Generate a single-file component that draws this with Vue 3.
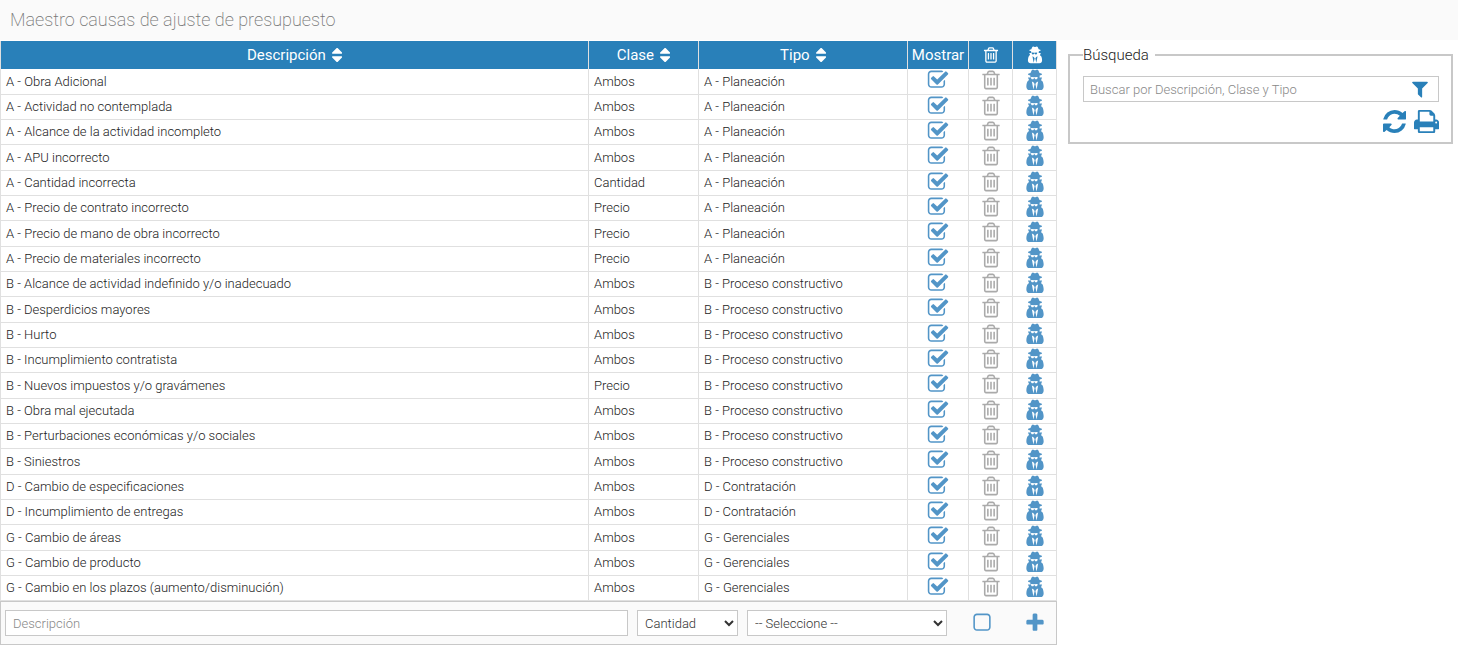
<script setup>
import { ref, computed } from 'vue'

const icons = {
  sort: 'M1408 1088q0 26-19 45l-448 448q-19 19-45 19t-45-19l-448-448q-19-19-19-45t19-45 45-19h896q26 0 45 19t19 45zm0-384q0 26-19 45t-45 19h-896q-26 0-45-19t-19-45 19-45l448-448q19-19 45-19t45 19l448 448q19 19 19 45z',
  checked: 'M1472 930v318q0 119-84.5 203.5t-203.5 84.5h-832q-119 0-203.5-84.5t-84.5-203.5v-832q0-119 84.5-203.5t203.5-84.5h832q63 0 117 25 15 7 18 23 3 17-9 29l-49 49q-10 10-23 10-3 0-9-2-23-6-45-6h-832q-66 0-113 47t-47 113v832q0 66 47 113t113 47h832q66 0 113-47t47-113v-254q0-13 9-22l64-64q10-10 23-10 6 0 12 3 20 8 20 29zm231-489l-814 814q-24 24-57 24t-57-24l-430-430q-24-24-24-57t24-57l110-110q24-24 57-24t57 24l263 263 647-647q24-24 57-24t57 24l110 110q24 24 24 57t-24 57z',
  unchecked: 'M1312 256h-832q-66 0-113 47t-47 113v832q0 66 47 113t113 47h832q66 0 113-47t47-113v-832q0-66-47-113t-113-47zm288 160v832q0 119-84.5 203.5t-203.5 84.5h-832q-119 0-203.5-84.5t-84.5-203.5v-832q0-119 84.5-203.5t203.5-84.5h832q119 0 203.5 84.5t84.5 203.5z',
  trash: 'M704 736v576q0 14-9 23t-23 9h-64q-14 0-23-9t-9-23v-576q0-14 9-23t23-9h64q14 0 23 9t9 23zm256 0v576q0 14-9 23t-23 9h-64q-14 0-23-9t-9-23v-576q0-14 9-23t23-9h64q14 0 23 9t9 23zm256 0v576q0 14-9 23t-23 9h-64q-14 0-23-9t-9-23v-576q0-14 9-23t23-9h64q14 0 23 9t9 23zm128 724v-948h-896v948q0 22 7 40.5t14.5 27 10.5 8.5h832q3 0 10.5-8.5t14.5-27 7-40.5zm-672-1076h448l-48-117q-7-9-17-11h-317q-10 2-17 11zm928 32v64q0 14-9 23t-23 9h-96v948q0 83-47 143.5t-113 60.5h-832q-66 0-113-58.5t-47-141.5v-952h-96q-14 0-23-9t-9-23v-64q0-14 9-23t23-9h309l70-167q15-37 54-63t79-26h320q40 0 79 26t54 63l70 167h309q14 0 23 9t9 23z',
  spy: 'M768 1664l96-448-96-128-128-64zm256 0l128-640-128 64-96 128zm100-992q-2-4-4-6-10-8-96-8-70 0-167 19-7 2-21 2t-21-2q-97-19-167-19-86 0-96 8-2 2-4 6 2 18 4 27 2 3 7.5 6.5t7.5 10.5q2 4 7.5 20.5t7 20.5 7.5 17 8.5 17 9 14 12 13.5 14 9.5 17.5 8 20.5 4 24.5 2q36 0 59-12.5t32.5-30 14.5-34.5 11.5-29.5 17.5-12.5h12q11 0 17.5 12.5t11.5 29.5 14.5 34.5 32.5 30 59 12.5q13 0 24.5-2t20.5-4 17.5-8 14-9.5 12-13.5 9-14 8.5-17 7.5-17 7-20.5 7.5-20.5q2-7 7.5-10.5t7.5-6.5q2-9 4-27zm476 779q0 121-73 190t-194 69h-874q-121 0-194-69t-73-190q0-61 4.5-118t19-125.5 37.5-123.5 63.5-103.5 93.5-74.5l-90-220h214q-22-64-22-128 0-12 2-32-194-40-194-96 0-57 210-99 17-62 51.5-134t70.5-114q32-37 76-37 30 0 84 31t84 31 84-31 84-31q44 0 76 37 36 42 70.5 114t51.5 134q210 42 210 99 0 56-194 96 7 81-20 160h214l-82 225q63 33 107.5 96.5t65.5 143.5 29 151.5 8 148.5z',
  filter: 'M1595 295q17 41-14 70l-493 493v742q0 42-39 59-13 5-25 5-27 0-45-19l-256-256q-19-19-19-45v-486l-493-493q-31-29-14-70 17-39 59-39h1280q42 0 59 39z',
  refresh: 'M1639 1056q0 5-1 7-64 268-268 434.5t-478 166.5q-146 0-282.5-55t-243.5-157l-129 129q-19 19-45 19t-45-19-19-45v-448q0-26 19-45t45-19h448q26 0 45 19t19 45-19 45l-137 137q71 66 161 102t187 36q134 0 250-65t186-179q11-17 53-117 8-23 30-23h192q13 0 22.5 9.5t9.5 22.5zm25-800v448q0 26-19 45t-45 19h-448q-26 0-45-19t-19-45 19-45l138-138q-148-137-349-137-134 0-250 65t-186 179q-11 17-53 117-8 23-30 23h-199q-13 0-22.5-9.5t-9.5-22.5v-7q65-268 270-434.5t480-166.5q146 0 284 55.5t245 156.5l130-129q19-19 45-19t45 19 19 45z',
  print: 'M448 1536h896v-256h-896v256zm0-640h896v-384h-160q-40 0-68-28t-28-68v-160h-640v640zm1152 64q0-26-19-45t-45-19-45 19-19 45 19 45 45 19 45-19 19-45zm128 0v416q0 13-9.5 22.5t-22.5 9.5h-224v160q0 40-28 68t-68 28h-960q-40 0-68-28t-28-68v-160h-224q-13 0-22.5-9.5t-9.5-22.5v-416q0-79 56.5-135.5t135.5-56.5h64v-544q0-40 28-68t68-28h672q40 0 88 20t76 48l152 152q28 28 48 76t20 88v256h64q79 0 135.5 56.5t56.5 135.5z',
  plus: 'M1600 736v192q0 40-28 68t-68 28h-416v416q0 40-28 68t-68 28h-192q-40 0-68-28t-28-68v-416h-416q-40 0-68-28t-28-68v-192q0-40 28-68t68-28h416v-416q0-40 28-68t68-28h192q40 0 68 28t28 68v416h416q40 0 68 28t28 68z',
}

const tipos = {
  A: 'A - Planeación',
  B: 'B - Proceso constructivo',
  D: 'D - Contratación',
  G: 'G - Gerenciales',
}

const rows = ref([
  ['A - Obra Adicional', 'Ambos'],
  ['A - Actividad no contemplada', 'Ambos'],
  ['A - Alcance de la actividad incompleto', 'Ambos'],
  ['A - APU incorrecto', 'Ambos'],
  ['A - Cantidad incorrecta', 'Cantidad'],
  ['A - Precio de contrato incorrecto', 'Precio'],
  ['A - Precio de mano de obra incorrecto', 'Precio'],
  ['A - Precio de materiales incorrecto', 'Precio'],
  ['B - Alcance de actividad indefinido y/o inadecuado', 'Ambos'],
  ['B - Desperdicios mayores', 'Ambos'],
  ['B - Hurto', 'Ambos'],
  ['B - Incumplimiento contratista', 'Ambos'],
  ['B - Nuevos impuestos y/o gravámenes', 'Precio'],
  ['B - Obra mal ejecutada', 'Ambos'],
  ['B - Perturbaciones económicas y/o sociales', 'Ambos'],
  ['B - Siniestros', 'Ambos'],
  ['D - Cambio de especificaciones', 'Ambos'],
  ['D - Incumplimiento de entregas', 'Ambos'],
  ['G - Cambio de áreas', 'Ambos'],
  ['G - Cambio de producto', 'Ambos'],
  ['G - Cambio en los plazos (aumento/disminución)', 'Ambos'],
].map(([descripcion, clase]) => ({ descripcion, clase, tipo: tipos[descripcion[0]], mostrar: true })))

const search = ref('')
const sortKey = ref('')
const draft = ref({ descripcion: '', clase: 'Cantidad', tipo: '', mostrar: false })

const visibleRows = computed(() => {
  const term = search.value.toLowerCase()
  const found = rows.value.filter((r) => `${r.descripcion} ${r.clase} ${r.tipo}`.toLowerCase().includes(term))
  return sortKey.value ? found.sort((a, b) => a[sortKey.value].localeCompare(b[sortKey.value])) : found
})

function removeRow(row) {
  rows.value = rows.value.filter((r) => r !== row)
}

function addRow() {
  if (!draft.value.descripcion || !draft.value.tipo) return
  rows.value.push({ ...draft.value })
  draft.value.descripcion = ''
}

function reset() {
  search.value = ''
  sortKey.value = ''
}

function printPage() {
  window.print()
}
</script>

<template>
  <div class="page">
    <header class="title-bar">
      <h1>Maestro causas de ajuste de presupuesto</h1>
    </header>
    <div class="content">
      <main>
        <table>
          <colgroup>
            <col />
            <col class="col-clase" />
            <col class="col-tipo" />
            <col class="col-mostrar" />
            <col class="col-action" />
            <col class="col-action" />
          </colgroup>
          <thead>
            <tr>
              <th v-for="[key, name] in [['descripcion', 'Descripción'], ['clase', 'Clase'], ['tipo', 'Tipo']]" :key="key" scope="col">
                <button type="button" class="sort" @click="sortKey = key">
                  {{ name }}
                  <svg class="icon-s" viewBox="384 0 1024 1792" aria-hidden="true"><path :d="icons.sort" /></svg>
                </button>
              </th>
              <th scope="col">Mostrar</th>
              <th scope="col" aria-label="Eliminar">
                <svg class="icon-s" viewBox="0 0 1792 1792" aria-hidden="true"><path :d="icons.trash" /></svg>
              </th>
              <th scope="col" aria-label="Auditoría">
                <svg class="icon-s" viewBox="0 0 1792 1792" aria-hidden="true"><path :d="icons.spy" /></svg>
              </th>
            </tr>
          </thead>
          <tbody>
            <tr v-for="row in visibleRows" :key="row.descripcion">
              <td>{{ row.descripcion }}</td>
              <td>{{ row.clase }}</td>
              <td>{{ row.tipo }}</td>
              <td class="action">
                <label class="check">
                  <input v-model="row.mostrar" type="checkbox" :aria-label="`Mostrar ${row.descripcion}`" />
                  <svg class="icon-m" viewBox="0 0 1792 1792" aria-hidden="true"><path :d="row.mostrar ? icons.checked : icons.unchecked" /></svg>
                </label>
              </td>
              <td class="action">
                <button type="button" class="grey" :aria-label="`Eliminar ${row.descripcion}`" @click="removeRow(row)">
                  <svg class="icon-m" viewBox="0 0 1792 1792" aria-hidden="true"><path :d="icons.trash" /></svg>
                </button>
              </td>
              <td class="action">
                <button type="button" class="soft" :aria-label="`Auditoría de ${row.descripcion}`">
                  <svg class="icon-m" viewBox="0 0 1792 1792" aria-hidden="true"><path :d="icons.spy" /></svg>
                </button>
              </td>
            </tr>
          </tbody>
        </table>
        <form class="new-row" @submit.prevent="addRow">
          <input v-model="draft.descripcion" class="field grow" type="text" placeholder="Descripción" aria-label="Descripción" />
          <select v-model="draft.clase" class="field pick-clase" aria-label="Clase">
            <option>Ambos</option>
            <option>Cantidad</option>
            <option>Precio</option>
          </select>
          <select v-model="draft.tipo" class="field pick-tipo" aria-label="Tipo">
            <option value="">-- Seleccione --</option>
            <option v-for="tipo in tipos" :key="tipo">{{ tipo }}</option>
          </select>
          <div class="new-check">
            <label class="check">
              <input v-model="draft.mostrar" type="checkbox" aria-label="Mostrar" />
              <svg class="icon-m" viewBox="0 0 1792 1792" aria-hidden="true"><path :d="draft.mostrar ? icons.checked : icons.unchecked" /></svg>
            </label>
          </div>
          <button type="submit" class="soft add" aria-label="Agregar">
            <svg class="icon-m" viewBox="0 0 1792 1792" aria-hidden="true"><path :d="icons.plus" /></svg>
          </button>
        </form>
      </main>
      <aside>
        <fieldset>
          <legend>Búsqueda</legend>
          <div class="search">
            <input v-model="search" type="text" placeholder="Buscar por Descripción, Clase y Tipo" aria-label="Buscar" />
            <button type="button" class="strong" aria-label="Filtrar">
              <svg class="icon-f" viewBox="0 0 1792 1792" aria-hidden="true"><path :d="icons.filter" /></svg>
            </button>
          </div>
          <div class="tools">
            <button type="button" class="strong" aria-label="Actualizar" @click="reset">
              <svg class="icon-l" viewBox="128 0 1536 1792" aria-hidden="true"><path :d="icons.refresh" /></svg>
            </button>
            <button type="button" class="strong" aria-label="Imprimir" @click="printPage">
              <svg class="icon-l" viewBox="64 0 1664 1792" aria-hidden="true"><path :d="icons.print" /></svg>
            </button>
          </div>
        </fieldset>
      </aside>
    </div>
  </div>
</template>

<style>
body {
  margin: 0;
  background: #fff;
}
</style>

<style scoped>
.page {
  font: 300 13px/16px Roboto, "Liberation Sans", sans-serif;
  color: #222;
}
.page * {
  box-sizing: border-box;
}
.title-bar {
  padding: 8px 10px;
  background: #fafafa;
}
h1 {
  margin: 0;
  font-size: 18px;
  line-height: 24px;
  font-weight: 200;
  color: #777;
}
.content {
  display: grid;
  grid-template-columns: minmax(0, 1fr) 385px;
  gap: 11px;
  align-items: start;
  padding: 1px 5px 0 0;
}
table {
  width: 100%;
  table-layout: fixed;
  border-collapse: separate;
  border-spacing: 0;
  border-left: 1px solid #e0e0e0;
}
.col-clase {
  width: 110px;
}
.col-tipo {
  width: 209px;
}
.col-mostrar {
  width: 61px;
}
.col-action {
  width: 44px;
}
th {
  height: 28px;
  padding: 0;
  background: #2980b9;
  border-right: 1px solid #e0e0e0;
  color: #fff;
  font-size: 15px;
  line-height: 20px;
  font-weight: 400;
}
td {
  height: 25px;
  padding: 0 5px;
  border-right: 1px solid #e0e0e0;
  border-bottom: 1px solid #e0e0e0;
  white-space: nowrap;
}
tbody tr:nth-child(3n + 1) td {
  height: 26px;
}
td.action {
  padding: 0;
  text-align: center;
  vertical-align: top;
}
button {
  display: inline-flex;
  align-items: center;
  justify-content: center;
  padding: 0;
  border: 0;
  background: none;
  color: inherit;
  font: inherit;
  cursor: pointer;
}
td button,
.check {
  vertical-align: top;
}
svg {
  display: block;
  fill: currentColor;
}
th svg {
  margin: 0 auto;
}
.sort {
  gap: 6px;
}
.icon-s {
  height: 18px;
}
.icon-m {
  width: 22px;
  height: 22px;
}
.icon-f {
  width: 20px;
  height: 20px;
}
.icon-l {
  height: 27px;
}
.grey {
  color: #aaa;
}
.soft,
.check {
  color: #5295c7;
}
.strong {
  color: #2980b9;
}
.check {
  position: relative;
  display: inline-block;
}
.check input {
  position: absolute;
  inset: 0;
  width: 100%;
  height: 100%;
  margin: 0;
  opacity: 0;
  cursor: pointer;
}
.new-row {
  display: flex;
  align-items: center;
  gap: 9px;
  padding: 8px 4px;
  background: #fafafa;
  border: 1px solid #c8c8c8;
}
.field {
  height: 26px;
  border: 1px solid #c8c8c8;
  border-radius: 0;
  background: #fff;
  color: #333;
  font: inherit;
}
input.field {
  padding: 0 7px;
}
select.field {
  padding: 0 3px;
}
.grow {
  flex: 1;
  min-width: 0;
}
.pick-clase {
  width: 101px;
}
.pick-tipo {
  width: 200px;
}
.new-check {
  width: 52px;
  text-align: center;
}
.add {
  width: 35px;
}
input::placeholder {
  color: #888;
  opacity: 1;
}
aside {
  padding-top: 4px;
}
fieldset {
  min-width: 0;
  margin: 0;
  padding: 11px 12px 7px 13px;
  border: 2px solid #c8c8c8;
}
legend {
  padding: 0 6px 0 0;
  font-size: 15px;
  line-height: 20px;
}
.search {
  display: flex;
  align-items: center;
  height: 26px;
  padding-right: 8px;
  border: 1px solid #c8c8c8;
}
.search input {
  flex: 1;
  min-width: 0;
  height: 24px;
  padding: 0 6px;
  border: 0;
  background: none;
  color: #333;
  font: inherit;
}
.tools {
  display: flex;
  justify-content: flex-end;
  gap: 8px;
  padding-top: 6px;
}
@media (max-width: 900px) {
  .content {
    grid-template-columns: minmax(0, 1fr);
    padding-right: 0;
  }
}
</style>
